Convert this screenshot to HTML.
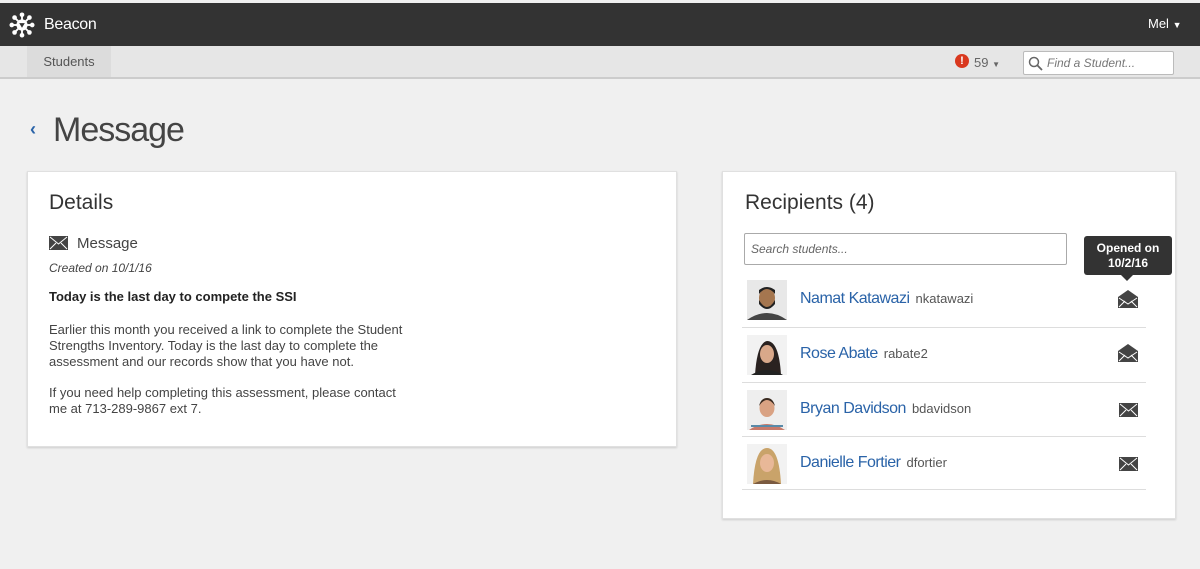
<!DOCTYPE html>
<html><head><meta charset="utf-8"><style>
*{box-sizing:border-box;margin:0;padding:0}
body{width:1200px;height:569px;background:#f0f0f0;font-family:"Liberation Sans",sans-serif;color:#333;position:relative;overflow:hidden}
.abs{position:absolute}
.top{left:0;top:3px;width:1200px;height:43px;background:#333}
.sub{left:0;top:46px;width:1200px;height:33px;background:#e6e6e6;border-bottom:2px solid #ccc}
.card{background:#fff;border:1px solid #e0e0e0;box-shadow:0 1px 2px rgba(0,0,0,.15)}
.name{color:#2a63a8;font-size:16px;letter-spacing:-.5px}
.uid{color:#555;font-size:13px;margin-left:6px}
.row{position:absolute;left:742px;width:404px;height:1px;background:#ddd}
p{font-size:13px;line-height:16px;color:#444}
</style></head><body>
<div class="abs top"></div>
<svg class="abs" style="left:9px;top:12px" width="26" height="26" viewBox="0 0 28 28">
<g stroke="#fff" stroke-width="2"><line x1="14" y1="14" x2="14" y2="3"/><line x1="14" y1="14" x2="14" y2="25"/><line x1="14" y1="14" x2="3" y2="14"/><line x1="14" y1="14" x2="25" y2="14"/><line x1="14" y1="14" x2="6" y2="6"/><line x1="14" y1="14" x2="22" y2="6"/><line x1="14" y1="14" x2="6" y2="22"/><line x1="14" y1="14" x2="22" y2="22"/></g>
<g fill="#fff"><circle cx="14" cy="3" r="2.5"/><circle cx="14" cy="25" r="2.5"/><circle cx="3" cy="14" r="2.5"/><circle cx="25" cy="14" r="2.5"/><circle cx="6" cy="6" r="2.5"/><circle cx="22" cy="6" r="2.5"/><circle cx="6" cy="22" r="2.5"/><circle cx="22" cy="22" r="2.5"/><circle cx="14" cy="14" r="6"/></g>
<path d="M11 12 L14 17 L17 12Z" fill="#333"/></svg>
<div class="abs" style="left:44px;top:16px;color:#fff;font-size:16px;letter-spacing:-.3px">Beacon</div>
<div class="abs" style="left:1148px;top:16px;color:#fff;font-size:13px">Mel <span style="font-size:9px">▼</span></div>
<div class="abs sub"></div>
<div class="abs" style="left:27px;top:46px;width:84px;height:31px;background:#dcdcdc;color:#555;font-size:13px;text-align:center;line-height:31px">Students</div>
<div class="abs" style="left:955px;top:54px;width:14px;height:14px;border-radius:50%;background:#d9381e;color:#fff;font-size:11px;font-weight:bold;text-align:center;line-height:14px">!</div>
<div class="abs" style="left:974px;top:55px;color:#666;font-size:13px">59 <span style="font-size:8px">▼</span></div>
<div class="abs" style="left:1023px;top:51px;width:151px;height:24px;background:#fff;border:1px solid #bbb;border-radius:2px"></div>
<svg class="abs" style="left:1028px;top:56px" width="15" height="15" viewBox="0 0 15 15"><circle cx="6" cy="6" r="4.5" fill="none" stroke="#666" stroke-width="1.5"/><line x1="9.3" y1="9.3" x2="14" y2="14" stroke="#666" stroke-width="1.8"/></svg>
<div class="abs" style="left:1047px;top:56px;color:#777;font-size:12px;font-style:italic">Find a Student...</div>
<div class="abs" style="left:30px;top:119px;color:#2a63a8;font-size:18px;font-weight:bold">‹</div>
<div class="abs" style="left:53px;top:111px;font-size:34px;color:#444;letter-spacing:-1px">Message</div>

<div class="abs card" style="left:27px;top:171px;width:650px;height:276px"></div>
<div class="abs" style="left:49px;top:191px;font-size:21px;color:#333">Details</div>
<svg class="abs" style="left:49px;top:236px" width="19" height="14" viewBox="0 0 19 14"><rect width="19" height="14" fill="#444"/><path d="M1 1 L9.5 8 L18 1 M1 13 L7 7 M18 13 L12 7" stroke="#fff" stroke-width="1" fill="none"/></svg>
<div class="abs" style="left:77px;top:235px;font-size:15px;color:#444">Message</div>
<div class="abs" style="left:49px;top:261px;font-size:12px;color:#444;font-style:italic">Created on 10/1/16</div>
<div class="abs" style="left:49px;top:289px;font-size:13px;font-weight:bold;color:#222">Today is the last day to compete the SSI</div>
<p class="abs" style="left:49px;top:322px;width:362px">Earlier this month you received a link to complete the Student Strengths Inventory. Today is the last day to complete the assessment and our records show that you have not.</p>
<p class="abs" style="left:49px;top:385px;width:362px">If you need help completing this assessment, please contact me at 713-289-9867 ext 7.</p>

<div class="abs card" style="left:722px;top:171px;width:454px;height:348px"></div>
<div class="abs" style="left:745px;top:191px;font-size:21px;color:#333">Recipients (4)</div>
<div class="abs" style="left:744px;top:233px;width:323px;height:32px;border:1px solid #aaa;border-radius:2px;background:#fff"></div>
<div class="abs" style="left:751px;top:242px;font-size:12px;color:#666;font-style:italic">Search students...</div>
<div class="abs" style="left:1084px;top:236px;width:88px;height:39px;background:#333;border-radius:3px;color:#fff;font-size:12px;font-weight:bold;text-align:center;line-height:15px;padding-top:5px">Opened on<br>10/2/16</div>
<div class="abs" style="left:1121px;top:275px;width:0;height:0;border-left:6px solid transparent;border-right:6px solid transparent;border-top:6px solid #333"></div>

<svg class="abs" style="left:747px;top:280px" width="40" height="40"><rect width="40" height="40" fill="#e8e8e8"/><path d="M0 40 Q20 26 40 40Z" fill="#444"/><ellipse cx="20" cy="18" rx="8" ry="10" fill="#a5764f"/><path d="M12 20 Q20 34 28 20 L28 24 Q20 34 12 24Z" fill="#222"/><path d="M12 14 Q20 4 28 14 L28 10 Q20 4 12 10Z" fill="#222"/></svg>
<div class="abs" style="left:800px;top:290px"><span class="name">Namat Katawazi</span><span class="uid">nkatawazi</span></div>
<svg class="abs" style="left:747px;top:335px" width="40" height="40"><rect width="40" height="40" fill="#f2f2f2"/><path d="M8 40 Q10 8 20 6 Q32 6 34 40Z" fill="#2a2220"/><ellipse cx="20" cy="19" rx="7" ry="9" fill="#d9a88a"/><path d="M4 40 Q20 30 36 40Z" fill="#222"/></svg>
<div class="abs" style="left:800px;top:345px"><span class="name">Rose Abate</span><span class="uid">rabate2</span></div>
<svg class="abs" style="left:747px;top:390px" width="40" height="40"><rect width="40" height="40" fill="#eee"/><path d="M2 40 Q20 28 38 40Z" fill="#c87a6a"/><path d="M4 36 H36" stroke="#5a8aa8" stroke-width="2"/><ellipse cx="20" cy="18" rx="7.5" ry="9" fill="#d9a283"/><path d="M12 16 Q20 4 28 16 Q26 8 20 8 Q14 8 12 16Z" fill="#3a2a20"/></svg>
<div class="abs" style="left:800px;top:400px"><span class="name">Bryan Davidson</span><span class="uid">bdavidson</span></div>
<svg class="abs" style="left:747px;top:444px" width="40" height="40"><rect width="40" height="40" fill="#f2f2f2"/><path d="M6 40 Q8 4 20 4 Q32 4 34 40Z" fill="#c9a36a"/><ellipse cx="20" cy="19" rx="7" ry="9" fill="#e8b898"/><path d="M6 40 Q20 32 34 40Z" fill="#7a5a40"/></svg>
<div class="abs" style="left:800px;top:454px"><span class="name">Danielle Fortier</span><span class="uid">dfortier</span></div>

<div class="row" style="top:327px"></div><div class="row" style="top:382px"></div><div class="row" style="top:436px"></div><div class="row" style="top:489px"></div>

<svg class="abs" style="left:1118px;top:289px" width="20" height="20" viewBox="0 0 20 20"><path d="M0 8 L10 1 L20 8 V19 H0Z" fill="#444"/><path d="M1 9 L10 15 L19 9 M1 18 L7 12 M19 18 L13 12" stroke="#fff" stroke-width="1" fill="none"/></svg>
<svg class="abs" style="left:1118px;top:343px" width="20" height="20" viewBox="0 0 20 20"><path d="M0 8 L10 1 L20 8 V19 H0Z" fill="#444"/><path d="M1 9 L10 15 L19 9 M1 18 L7 12 M19 18 L13 12" stroke="#fff" stroke-width="1" fill="none"/></svg>
<svg class="abs" style="left:1119px;top:403px" width="19" height="14" viewBox="0 0 19 14"><rect width="19" height="14" fill="#444"/><path d="M1 1 L9.5 8 L18 1 M1 13 L7 7 M18 13 L12 7" stroke="#fff" stroke-width="1" fill="none"/></svg>
<svg class="abs" style="left:1119px;top:457px" width="19" height="14" viewBox="0 0 19 14"><rect width="19" height="14" fill="#444"/><path d="M1 1 L9.5 8 L18 1 M1 13 L7 7 M18 13 L12 7" stroke="#fff" stroke-width="1" fill="none"/></svg>
</body></html>
